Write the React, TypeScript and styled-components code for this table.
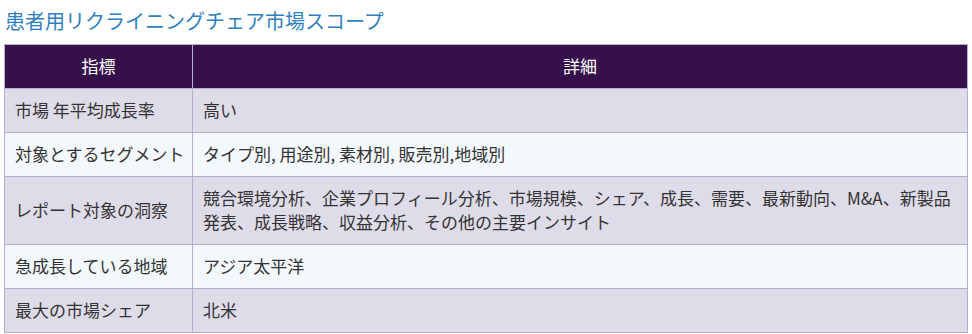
import styled, { createGlobalStyle } from 'styled-components';

type rowType = {
  label: string;
  detail: string;
};

const rows: rowType[] = [
  { label: '市場 年平均成長率', detail: '高い' },
  { label: '対象とするセグメント', detail: 'タイプ別, 用途別, 素材別, 販売別,地域別' },
  {
    label: 'レポート対象の洞察',
    detail:
      '競合環境分析、企業プロフィール分析、市場規模、シェア、成長、需要、最新動向、M&A、新製品発表、成長戦略、収益分析、その他の主要インサイト',
  },
  { label: '急成長している地域', detail: 'アジア太平洋' },
  { label: '最大の市場シェア', detail: '北米' },
];

function App() {
  return (
    <>
      <GlobalStyle />
      <Page>
        <Title>患者用リクライニングチェア市場スコープ</Title>
        <Table>
          <colgroup>
            <col style={{ width: 188 }} />
            <col />
          </colgroup>
          <thead>
            <tr>
              <HeadCell>指標</HeadCell>
              <HeadCell>詳細</HeadCell>
            </tr>
          </thead>
          <tbody>
            {rows.map((row, i) => (
              <Row key={row.label} odd={i % 2 === 0}>
                <Cell nowrap>{row.label}</Cell>
                <Cell>{row.detail}</Cell>
              </Row>
            ))}
          </tbody>
        </Table>
      </Page>
    </>
  );
}

const GlobalStyle = createGlobalStyle`
  body {
    margin: 0;
    background: #fff;
    font-family: 'Noto Sans CJK JP', 'Noto Sans', sans-serif;
    color: #333;
  }
`;

const Page = styled.div`
  padding: 5px 4px 0 4px;
`;

const Title = styled.h2`
  margin: 0 0 7px 1px;
  font-size: 20px;
  font-weight: 400;
  line-height: 32px;
  color: #2f7fc0;
`;

const Table = styled.table`
  width: 964px;
  border-collapse: collapse;
  table-layout: fixed;
  font-size: 17px;
  line-height: 24px;
`;

const HeadCell = styled.th`
  background: #36104a;
  color: #fff;
  font-weight: 400;
  text-align: center;
  padding: 9px 12px 10px;
  border: 1px solid #b9aed2;
`;

const Row = styled.tr<{ odd: boolean }>`
  background: ${({ odd }) => (odd ? '#dfdcea' : '#f3f8fc')};
`;

const Cell = styled.td<{ nowrap?: boolean }>`
  padding: 9px 6px 10px 10px;
  border: 1px solid #b3aecb;
  vertical-align: middle;
  color: #333;
  white-space: ${({ nowrap }) => (nowrap ? 'nowrap' : 'normal')};
`;

export default App;
